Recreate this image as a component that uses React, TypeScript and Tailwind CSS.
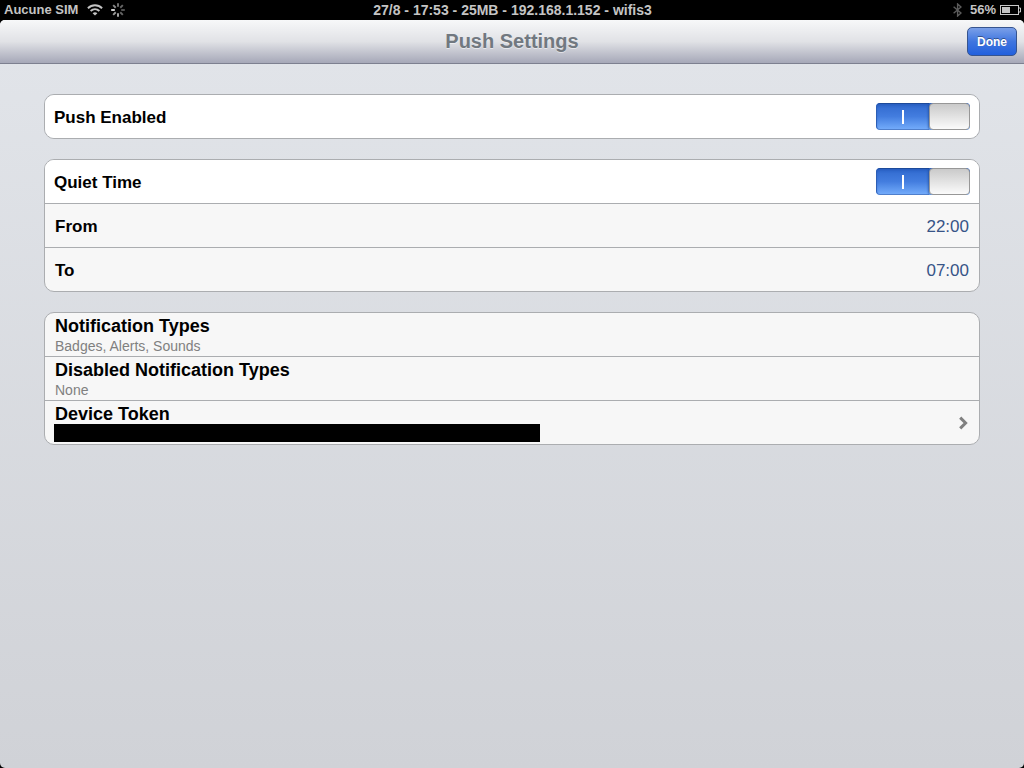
import { useState } from 'react';
import type { ReactNode } from 'react';

function WifiIcon() {
  return (
    <svg width="16" height="12" viewBox="0 0 16 12" fill="none" stroke="#c4c4c4" strokeWidth="1.9" aria-hidden="true">
      <path d="M0.9 4.3C5 0.3 11 0.3 15.1 4.3" />
      <path d="M3.6 7C6.2 4.6 9.8 4.6 12.4 7" />
      <path d="M8 11.6L5.6 9.2C7 8 9 8 10.4 9.2Z" fill="#c4c4c4" stroke="none" />
    </svg>
  );
}

const spokes = ['#777', '#666', '#555', '#666', '#aaa', '#999', '#ddd', '#888'];

function Spinner() {
  return (
    <svg width="14" height="14" viewBox="-7 -7 14 14" aria-hidden="true">
      {spokes.map((color, i) => (
        <line
          key={i}
          x1="0"
          y1="-3.2"
          x2="0"
          y2="-6.8"
          stroke={color}
          strokeWidth="1.9"
          transform={`rotate(${i * 45})`}
        />
      ))}
    </svg>
  );
}

function BluetoothIcon() {
  return (
    <svg width="9" height="14" viewBox="0 0 9 14" fill="none" stroke="#5c5c5c" strokeWidth="1.4" aria-hidden="true">
      <path d="M0.6 3.8L8 10L4.6 13V1L8 4L0.6 10.2" />
    </svg>
  );
}

function BatteryIcon() {
  return (
    <svg width="21" height="10" viewBox="0 0 21 10" fill="none" aria-hidden="true">
      <rect x="0.5" y="0.5" width="18" height="9" stroke="#c8c8c8" />
      <rect x="2" y="2" width="8" height="6" fill="#c4c4c4" />
      <path d="M19 3H20.5V7H19" stroke="#c8c8c8" />
    </svg>
  );
}

function StatusBar() {
  return (
    <div className="grid h-5 grid-cols-[1fr_auto_1fr] items-center pr-[3px] pl-1 text-[13px] leading-5 font-bold text-[#c4c4c4]">
      <div className="flex items-center">
        <span>Aucune SIM</span>
        <span className="ml-[9px] flex items-center gap-2">
          <WifiIcon />
          <Spinner />
        </span>
      </div>
      <span className="text-[14px]">27/8 - 17:53 - 25MB - 192.168.1.152 - wifis3</span>
      <div className="flex items-center justify-end">
        <BluetoothIcon />
        <span className="mr-1 ml-2">56%</span>
        <BatteryIcon />
      </div>
    </div>
  );
}

function Toggle({ id }: { id: string }) {
  const [on, setOn] = useState(true);

  return (
    <label
      htmlFor={id}
      className={`relative flex h-[27px] w-[94px] cursor-pointer overflow-hidden rounded ${
        on ? 'bg-linear-to-b from-[#2f68cd] via-[#437ddf] to-[#76aefc]' : 'flex-row-reverse bg-[#eeeeee]'
      }`}
    >
      <input
        id={id}
        type="checkbox"
        role="switch"
        checked={on}
        onChange={() => setOn(!on)}
        className="sr-only"
      />
      <span
        className={`flex flex-1 items-center justify-center rounded-l border border-r-0 ${
          on
            ? 'border-[#2c5eb5] border-t-[#1d4a9a] border-b-[#4f7fcc] shadow-[inset_0_2px_2px_#1d4fae60]'
            : 'border-[#979797]'
        }`}
      >
        <span className={on ? 'h-[14px] w-[2px] bg-white' : 'size-3 rounded-full border-2 border-[#808080]'} />
      </span>
      <span className="w-[41px] rounded border border-[#979797] bg-linear-to-b from-[#cacaca] to-[#fbfbfb] shadow-[-1px_0_2px_#1b438880]" />
    </label>
  );
}

function Group({ children }: { children: ReactNode }) {
  return (
    <section className="divide-y divide-[#abadb0] overflow-hidden rounded-[10px] border border-[#abadb0] bg-[#f7f7f7]">
      {children}
    </section>
  );
}

function SwitchRow({ id, label }: { id: string; label: string }) {
  return (
    <div className="flex h-11 items-center justify-between bg-white px-[9px] last:h-[43px]">
      <label htmlFor={id} className="pt-[2px] text-[17px] leading-5 font-bold">
        {label}
      </label>
      <Toggle id={id} />
    </div>
  );
}

function ValueRow({ label, value }: { label: string; value: string }) {
  return (
    <div className="flex h-11 items-center justify-between px-[10px] pt-[2px] text-[17px] leading-5 last:h-[43px]">
      <span className="font-bold">{label}</span>
      <span className="text-[#385487]">{value}</span>
    </div>
  );
}

function DetailRow({ title, children }: { title: string; children: ReactNode }) {
  return (
    <div className="h-11 px-[10px] pt-[3px] last:h-[43px]">
      <h2 className="text-[18px] leading-5 font-bold">{title}</h2>
      <p className="text-[14px] leading-5 text-[#808080]">{children}</p>
    </div>
  );
}

export default function App() {
  return (
    <div className="flex min-h-screen flex-col bg-black font-['Liberation_Sans',Arial,sans-serif] text-black">
      <StatusBar />
      <div className="flex flex-1 flex-col overflow-hidden rounded-[5px] bg-linear-to-b from-[#e2e5ea] to-[#d0d2d7]">
        <header className="grid h-11 grid-cols-[1fr_auto_1fr] items-center border-b border-[#7d8090] bg-linear-to-b from-[#f7f8f9] via-[#e1e2e6] to-[#a6a8b8] px-[7px]">
          <h1 className="col-start-2 pb-[2px] text-[20px] leading-6 font-bold text-[#717880] [text-shadow:0_1px_0_#ffffff80]">
            Push Settings
          </h1>
          <button
            type="button"
            className="h-[29px] w-[50px] justify-self-end rounded-[5px] border border-[#36548f] bg-linear-to-b from-[#7a9fe8] via-[#3f75df] to-[#2260dd] text-[12px] font-bold text-white [text-shadow:0_-1px_0_#00000066]"
          >
            Done
          </button>
        </header>

        <main className="flex flex-col gap-5 px-11 py-[30px]">
          <Group>
            <SwitchRow id="push-enabled" label="Push Enabled" />
          </Group>

          <Group>
            <SwitchRow id="quiet-time" label="Quiet Time" />
            <ValueRow label="From" value="22:00" />
            <ValueRow label="To" value="07:00" />
          </Group>

          <Group>
            <DetailRow title="Notification Types">Badges, Alerts, Sounds</DetailRow>
            <DetailRow title="Disabled Notification Types">None</DetailRow>
            <button type="button" className="flex h-[43px] w-full items-center justify-between pr-[11px] pl-[9px] text-left">
              <span className="flex w-[486px] flex-col self-start pt-[3px]">
                <span className="pl-px text-[18px] leading-5 font-bold">Device Token</span>
                {/* token is redacted */}
                <span className="h-[18px] bg-black" />
              </span>
              <svg width="9" height="14" viewBox="0 0 9 14" fill="none" stroke="#808080" strokeWidth="3" aria-hidden="true">
                <path d="M1.2 1.6L6.6 7L1.2 12.4" />
              </svg>
            </button>
          </Group>
        </main>
      </div>
    </div>
  );
}
